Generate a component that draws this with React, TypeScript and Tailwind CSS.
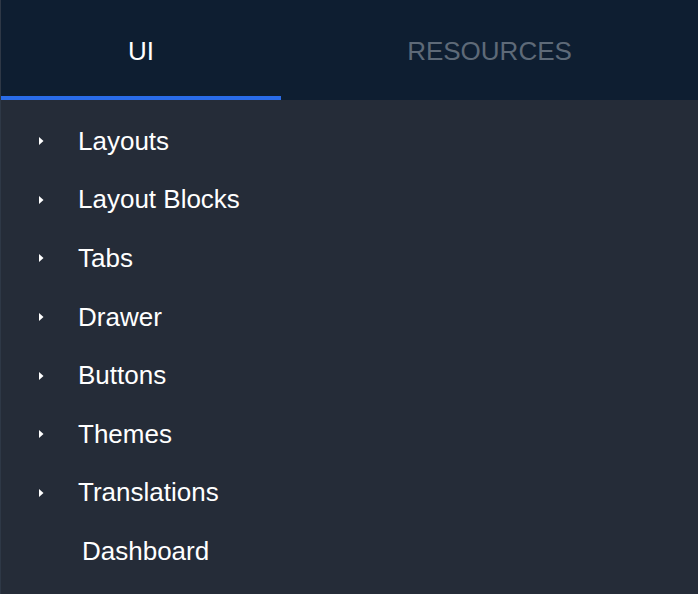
import React from 'react';

const items = ['Layouts', 'Layout Blocks', 'Tabs', 'Drawer', 'Buttons', 'Themes', 'Translations'];

const Caret = () => (
  <svg width="6" height="10" viewBox="0 0 6 10" className="shrink-0">
    <path d="M1 1 L5.5 5 L1 9 Z" fill="#ffffff" />
  </svg>
);

export default function App() {
  return (
    <div className="w-[698px] h-[594px] bg-[#252c38] border-l border-[#2e3846] font-['Liberation_Sans',Arial,sans-serif] overflow-hidden">
      <div className="flex h-[100px] bg-[#0e1e31]">
        <div className="w-[280px] flex flex-col">
          <div className="flex-1 flex items-center justify-center text-[26px] text-white pt-[6px]">UI</div>
          <div className="h-[4px] bg-[#2a6ce8]" />
        </div>
        <div className="flex-1 flex items-center justify-center text-[26px] text-[#5e6a78] pt-[3px]">RESOURCES</div>
      </div>
      <ul className="pt-[12px]">
        {items.map((label) => (
          <li key={label} className="h-[58.6px] flex items-center text-white text-[26px]">
            <span className="w-[77px] flex justify-center pl-[3px] pr-[1px]">
              <Caret />
            </span>
            <span>{label}</span>
          </li>
        ))}
        <li className="h-[58.6px] flex items-center text-white text-[26px] pl-[81px]">Dashboard</li>
      </ul>
    </div>
  );
}
